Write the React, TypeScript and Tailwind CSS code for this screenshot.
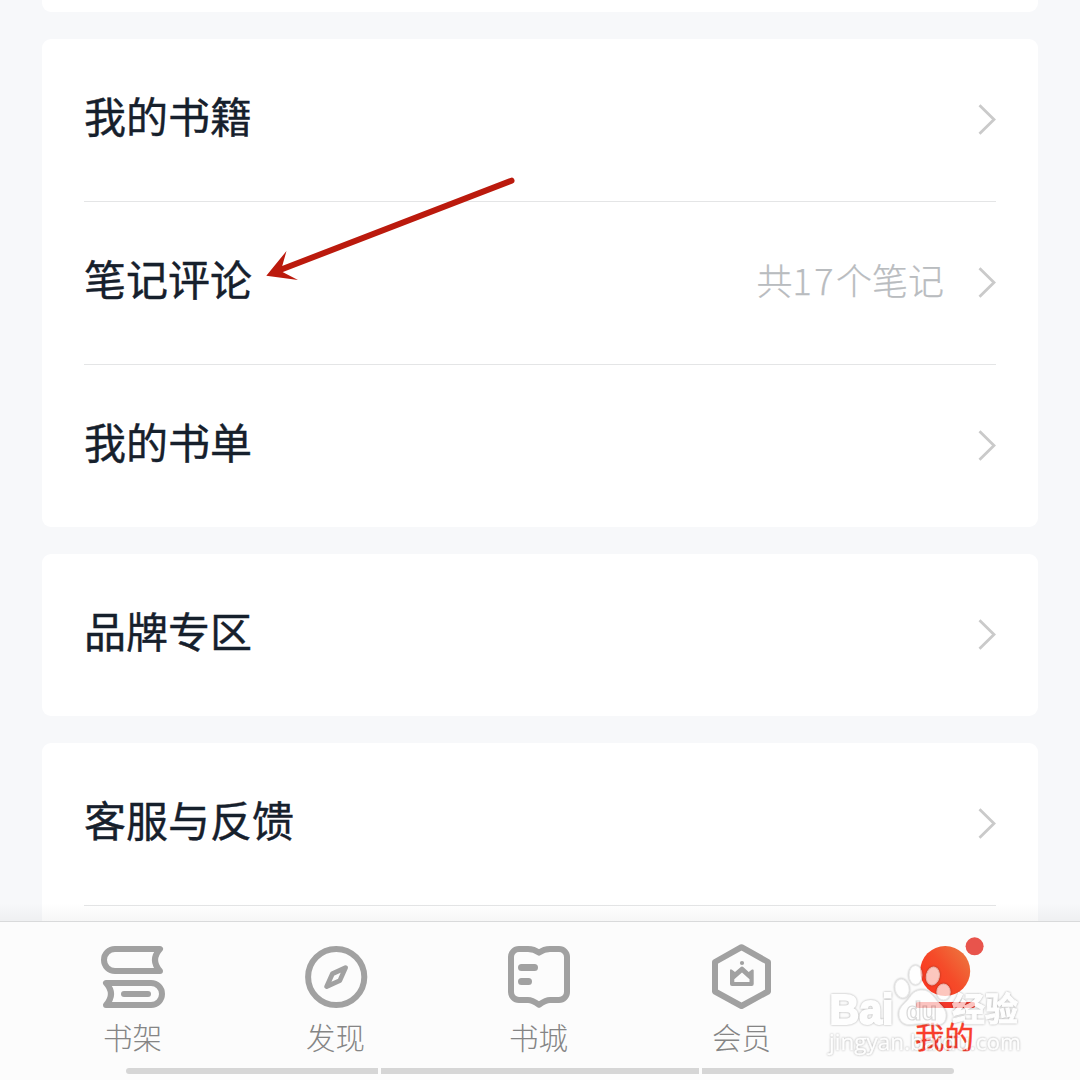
import type { ReactNode } from "react";

function Chevron() {
  return (
    <svg className="relative -top-[0.5px] h-8 w-[18px] shrink-0" viewBox="0 0 18 32" fill="none" stroke="#cacaca" strokeWidth="2.8">
      <path d="M1.5 1.2 L16 15.5 L1.5 29.8" />
    </svg>
  );
}

function Row({ title, meta }: { title: string; meta?: ReactNode }) {
  return (
    <div className="flex h-[162px] items-center justify-between">
      <span className="relative -top-[5px] text-[42px] leading-none text-[#16202c] [-webkit-text-stroke:0.4px_#16202c]">{title}</span>
      <div className="flex items-center gap-[34px]">
        {meta && <span className="relative -top-1 text-[36px] leading-none font-light text-[#b9bcbf] [-webkit-text-stroke:0.25px_#b9bcbf]">{meta}</span>}
        <Chevron />
      </div>
    </div>
  );
}

function Card({ children }: { children: ReactNode }) {
  return <section className="rounded-[9px] bg-white px-[42px]">{children}</section>;
}

function Divider() {
  return <div className="h-px bg-[#e4e5e6]" />;
}

function Tab({ label, viewBox, active, children }: { label: string; viewBox: string; active?: boolean; children: ReactNode }) {
  return (
    <div className="flex flex-col items-center pt-5">
      <svg className="h-[72px] w-[72px] overflow-visible" viewBox={viewBox} fill="none" stroke="#a1a1a1" strokeWidth="6" strokeLinecap="round" strokeLinejoin="round">
        {children}
      </svg>
      <span className={active ? "mt-[7px] text-[29.5px] leading-none text-[#f93d2b] [-webkit-text-stroke:0.4px_#f93d2b]" : "mt-[8px] text-[29.5px] leading-none font-light text-[#858585]"}>{label}</span>
    </div>
  );
}

function Watermark() {
  return (
    <svg className="absolute left-[820px] top-[955px] h-[110px] w-[210px] opacity-70" viewBox="820 955 210 110">
      <g fill="#ffffff" stroke="#ffffff" strokeWidth="1" style={{ filter: "drop-shadow(0 0 1px rgba(0,0,0,.45))" }}>
        <g stroke="#e2e2e2">
          <ellipse cx="902" cy="988.5" rx="7" ry="9.5" transform="rotate(-12 902 988.5)" />
          <ellipse cx="915.5" cy="975" rx="6.5" ry="9.5" />
          <ellipse cx="932.8" cy="976" rx="6.5" ry="9" transform="rotate(12 932.8 976)" />
          <ellipse cx="943.5" cy="992" rx="6.7" ry="8" />
          <path d="M922 990 C930 990 933 996 938 1002 C944 1008 946.5 1011 946 1017 C945 1025 939 1025.5 932 1024.5 C924 1023.5 919 1023.5 912 1024.5 C903 1026 898.5 1020 899 1013 C899.5 1006 906 1003 910 997 C913 992 917 990 922 990 Z" />
        </g>
        <text x="829.5" y="1023.5" fontSize="42" fontWeight="700" strokeWidth="2" fontFamily="'Liberation Sans', sans-serif" textLength="64" lengthAdjust="spacingAndGlyphs">Bai</text>
        <text x="952" y="1021" fontSize="33" fontWeight="700" fontFamily="'Noto Sans CJK SC', sans-serif" textLength="66" lengthAdjust="spacingAndGlyphs">经验</text>
        <text x="829" y="1050" fontSize="22" fontWeight="400" strokeWidth="0.3" fontFamily="'Open Sans', sans-serif" textLength="192" lengthAdjust="spacingAndGlyphs">jingyan.baidu.com</text>
      </g>
      <text x="906" y="1020" fontSize="25" fontWeight="700" fill="#ffffff" stroke="#cccccc" strokeWidth="1.2" fontFamily="'Liberation Sans', sans-serif" textLength="31" lengthAdjust="spacingAndGlyphs">du</text>
    </svg>
  );
}

export default function App() {
  return (
    <div className="relative flex h-[1080px] w-[1080px] flex-col overflow-hidden bg-[#f7f8fa] font-['Noto_Sans_CJK_SC',sans-serif]">
      <main className="flex h-[921px] shrink-0 flex-col gap-[27px] overflow-hidden px-[42px]">
        <div className="h-3 shrink-0 rounded-b-[9px] bg-white" />
        <Card>
          <Row title="我的书籍" />
          <Divider />
          <Row title="笔记评论" meta={<>共<span className="tracking-[2.5px]">17</span>个笔记</>} />
          <Divider />
          <Row title="我的书单" />
        </Card>
        <Card>
          <Row title="品牌专区" />
        </Card>
        <Card>
          <Row title="客服与反馈" />
          <Divider />
          <div className="h-[162px]" />
        </Card>
      </main>

      <div className="absolute left-0 top-[903px] h-[18px] w-full bg-gradient-to-b from-transparent to-black/[0.035]" />

      <nav className="grid h-[159px] shrink-0 grid-cols-5 border-t border-[#d9dadb] bg-[#fcfcfc] pr-[34px] pl-[31px]">
        <Tab label="书架" viewBox="97 942 72 72">
          <path d="M160 949 H115 A11 11 0 0 0 115 971 H160 Q150 960 160 949 Z" />
          <path d="M106 983 H151 A11 11 0 0 1 151 1005 H106 Q116 994 106 983 Z" />
          <path d="M124 994 H148" />
        </Tab>
        <Tab label="发现" viewBox="300 942 72 72">
          <circle cx="336.2" cy="977" r="28.1" />
          <path strokeWidth="4.8" d="M345.5 967.7 L332.4 973.8 L326.7 986.5 L339.8 980.6 Z" />
        </Tab>
        <Tab label="书城" viewBox="503 942 72 72">
          <path d="M519 949 H528 Q534 949 539 952.7 Q544 949 550 949 H559 a8 8 0 0 1 8 8 V992 a8 8 0 0 1 -8 8 H550 Q546 1000 539 1004.7 Q532 1000 528 1000 H519 a8 8 0 0 1 -8 -8 V957 a8 8 0 0 1 8 -8 Z" />
          <path strokeWidth="7" d="M521.5 967.5 H534.5 M521.5 981.5 H528.5" />
        </Tab>
        <Tab label="会员" viewBox="706 942 72 72">
          <path d="M741.5 947.2 L768 962 V991.5 L741.5 1006 L715 991.5 V962 Z" />
          <circle cx="742" cy="963" r="2.1" fill="#a1a1a1" stroke="none" />
          <path fill="#a1a1a1" stroke="none" fillRule="evenodd" d="M730 970 Q730.5 968.8 732 969.8 L735 972 L740.5 967.2 Q742 966 743.5 967.2 L748.7 972 L752 969.6 Q753.7 969 753.7 970.5 V984 Q753.7 986 751.7 986 H732 Q730 986 730 984 Z M734.3 982 H749.5 V979.3 L742 972.4 L734.3 979.3 Z" />
        </Tab>
        <Tab label="我的" viewBox="909 942 72 72" active>
          <defs>
            <linearGradient id="orb" x1="0.1" y1="0.75" x2="0.85" y2="0.15">
              <stop offset="0" stopColor="#fb3922" />
              <stop offset="0.5" stopColor="#f54b29" />
              <stop offset="1" stopColor="#ee6e3b" />
            </linearGradient>
          </defs>
          <circle cx="945.2" cy="971" r="25" fill="url(#orb)" stroke="none" />
          <circle cx="974.6" cy="946.3" r="9" fill="#e8544c" stroke="none" />
          <rect x="916" y="1002" width="59" height="6" rx="2" fill="#f2382c" stroke="none" />
        </Tab>
      </nav>

      <div className="absolute left-[126px] top-[1068px] flex h-[6px] w-[828px] gap-[3px] overflow-hidden rounded-full">
        <div className="w-[252px] bg-[#d6d6d6]" />
        <div className="w-[318px] bg-[#d6d6d6]" />
        <div className="w-[252px] bg-[#d6d6d6]" />
      </div>

      <Watermark />

      <svg className="absolute left-[260px] top-[170px] h-[120px] w-[260px]" viewBox="260 170 260 120">
        <path d="M511.5 180.7 L276 271.5" stroke="#bb1a0d" strokeWidth="6" strokeLinecap="round" />
        <path d="M266.3 275.7 L286.5 251 L281.5 268.5 L282.5 272 L298 280 Z" fill="#bb1a0d" />
      </svg>
    </div>
  );
}
